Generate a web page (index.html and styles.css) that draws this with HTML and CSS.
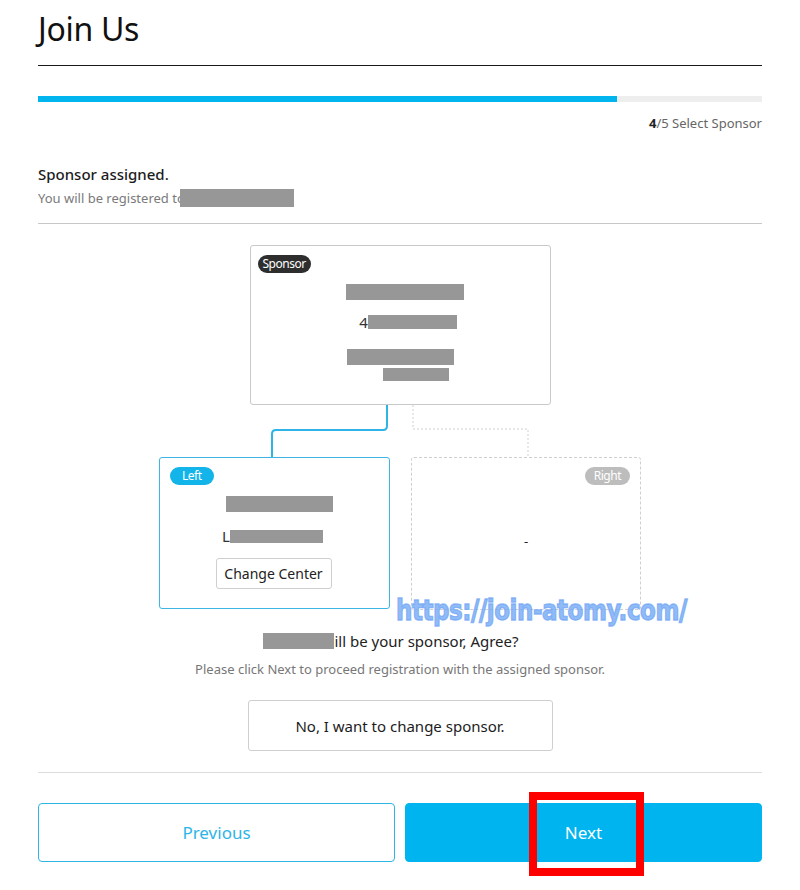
FILE: index.html
```html
<!DOCTYPE html>
<html lang="en">
<head>
<meta charset="utf-8">
<title>Join Us</title>
<link rel="stylesheet" href="styles.css">
</head>
<body>
<div class="page">
  <header class="header">
    <h1 class="title">Join Us</h1>
  </header>

  <div class="progress"><div class="progress-fill"></div></div>
  <div class="step"><b>4</b>/5 Select Sponsor</div>

  <section class="assigned">
    <div class="assigned-title">Sponsor assigned.</div>
    <div class="assigned-sub">You will be registered to<span class="redact r-sub"></span></div>
  </section>

  <section class="tree">
    <div class="card card-sponsor">
      <span class="badge badge-dark">Sponsor</span>
      <div class="line shift1"><span class="redact r-s1"></span></div>
      <div class="line line-2 shift"><span class="digit">4</span><span class="redact r-s2"></span></div>
      <div class="line line-3"><span class="redact r-s3"></span></div>
      <div class="line line-4 shift2"><span class="redact r-s4"></span></div>
    </div>

    <svg class="connector" width="482" height="52" viewBox="0 0 482 52">
      <path d="M228 0 V21 Q228 25 224 25 H117 Q113 25 113 29 V52" fill="none" stroke="#2eb4e6" stroke-width="2"/>
      <path d="M254 0 V24 H369 V52" fill="none" stroke="#cfcfcf" stroke-width="1" stroke-dasharray="2 2"/>
    </svg>

    <div class="legs">
      <div class="card card-left">
        <span class="badge badge-blue">Left</span>
        <div class="line shift-l1"><span class="redact r-l1"></span></div>
        <div class="line line-l2"><span class="digit">L</span><span class="redact r-l2"></span></div>
        <button class="btn-small">Change Center</button>
      </div>
      <div class="card card-right">
        <span class="badge badge-grey">Right</span>
        <div class="dash">-</div>
      </div>
    </div>
  </section>

  <p class="agree"><span class="redact r-agree"></span>ill be your sponsor, Agree?</p>
  <p class="hint">Please click Next to proceed registration with the assigned sponsor.</p>

  <div class="change-wrap">
    <button class="btn-change">No, I want to change sponsor.</button>
  </div>

  <footer class="actions">
    <button class="btn btn-prev">Previous</button>
    <button class="btn btn-next">Next</button>
  </footer>

  <div class="watermark">https://join-atomy.com/</div>
  <div class="highlight"></div>
</div>
</body>
</html>
```

FILE: styles.css
```css
* { box-sizing: border-box; }

html, body {
  margin: 0;
  padding: 0;
  background: #fff;
}

body {
  font-family: "Noto Sans", "Open Sans", "Liberation Sans", sans-serif;
  color: #222;
}

.page {
  position: relative;
  width: 800px;
  height: 890px;
  padding: 0 38px;
  overflow: hidden;
}

.header {
  padding-top: 7px;
  padding-bottom: 14px;
  border-bottom: 1px solid #1a1a1a;
}

.title {
  margin: 0;
  font-size: 32px;
  line-height: 44px;
  font-weight: 400;
  color: #111;
  letter-spacing: -0.3px;
}

.progress {
  margin-top: 30px;
  height: 6px;
  background: #eeeeee;
}

.progress-fill {
  width: 80%;
  height: 100%;
  background: #00b4ee;
}

.step {
  margin-top: 12px;
  text-align: right;
  font-size: 13px;
  line-height: 18px;
  color: #666;
}

.step b {
  color: #222;
  font-weight: 700;
}

.assigned {
  margin-top: 31px;
  padding-bottom: 16px;
  border-bottom: 1px solid #c8c8c8;
}

.assigned-title {
  font-size: 15px;
  line-height: 22px;
  font-weight: 500;
  color: #1c1c1c;
}

.assigned-sub {
  margin-top: 4px;
  font-size: 13px;
  line-height: 18px;
  color: #7a7a7a;
  display: flex;
  align-items: center;
}

.redact {
  display: inline-block;
  background: #979797;
}

.r-sub { width: 114px; height: 18px; margin-left: -5px; }

.tree {
  margin-top: 21px;
  display: flex;
  flex-direction: column;
  align-items: center;
}

.card {
  position: relative;
  background: #fff;
  border-radius: 3px;
}

.card-sponsor {
  width: 301px;
  height: 160px;
  border: 1px solid #c9c9c9;
  padding-top: 38px;
  display: flex;
  flex-direction: column;
  align-items: center;
}

.line {
  display: flex;
  align-items: center;
  justify-content: center;
  font-size: 15px;
  color: #222;
}

.line-2 { margin-top: 15px; }
.line-3 { margin-top: 20px; }
.line-4 { margin-top: 3px; }
.shift1 { margin-left: 10px; }
.shift { margin-left: 16px; }
.shift2 { margin-left: 32px; }

.digit {
  font-size: 15px;
  line-height: 14px;
  color: #333;
}

.r-s1 { width: 118px; height: 16px; }
.r-s2 { width: 89px; height: 14px; }
.r-s3 { width: 107px; height: 16px; }
.r-s4 { width: 66px; height: 13px; }

.badge {
  position: absolute;
  top: 9px;
  height: 18px;
  padding: 0 6px;
  border-radius: 9px;
  font-size: 12px;
  line-height: 18px;
  color: #fff;
  letter-spacing: -0.5px;
}

.badge-dark { left: 7px; background: #2e2e2e; padding: 0 5px; }
.badge-blue { left: 10px; background: #12b4ea; padding: 0 12px; }
.badge-grey { right: 10px; background: #bdbdbd; padding: 0 9px; }

.connector {
  display: block;
}

.legs {
  display: flex;
  gap: 21px;
  width: 482px;
}

.card-left {
  width: 231px;
  height: 152px;
  border: 1px solid #3db6e4;
  padding-top: 38px;
  display: flex;
  flex-direction: column;
  align-items: center;
}

.shift-l1 { margin-left: 10px; }

.r-l1 { width: 107px; height: 16px; }
.r-l2 { width: 93px; height: 13px; }

.line-l2 {
  margin-top: 17px;
  margin-left: -4px;
}

.btn-small {
  margin-top: 15px;
  margin-left: -2px;
  width: 116px;
  height: 31px;
  border: 1px solid #cfcfcf;
  border-radius: 3px;
  background: #fff;
  font-family: inherit;
  font-size: 14px;
  color: #222;
  padding: 0;
}

.card-right {
  width: 230px;
  height: 153px;
  border: 1px dashed #cfcfcf;
  display: flex;
  align-items: center;
  justify-content: center;
}

.dash {
  font-size: 13px;
  color: #222;
  margin-top: 14px;
}

.agree {
  margin: 20px 0 0;
  padding-right: 18px;
  display: flex;
  align-items: center;
  justify-content: center;
  font-size: 15px;
  line-height: 22px;
  color: #222;
}

.r-agree { width: 71px; height: 16px; }

.hint {
  margin: 8px 0 0;
  text-align: center;
  font-size: 13px;
  line-height: 18px;
  color: #777;
}

.change-wrap {
  margin-top: 22px;
  padding-bottom: 21px;
  border-bottom: 1px solid #dddddd;
  display: flex;
  justify-content: center;
}

.btn-change {
  width: 305px;
  height: 51px;
  border: 1px solid #cfcfcf;
  border-radius: 3px;
  background: #fff;
  font-family: inherit;
  font-size: 15px;
  color: #1c1c1c;
  padding: 0;
}

.actions {
  margin-top: 30px;
  display: flex;
  gap: 10px;
}

.btn {
  flex: 1;
  height: 59px;
  border-radius: 4px;
  font-family: inherit;
  font-size: 17px;
  padding: 0;
}

.btn-prev {
  background: #fff;
  border: 1px solid #2db5e6;
  color: #2db5e6;
}

.btn-next {
  background: #00b5ef;
  border: 1px solid #00b5ef;
  color: #fff;
}

.watermark {
  position: absolute;
  left: 396px;
  top: 592px;
  font-family: "DejaVu Sans", sans-serif;
  font-stretch: condensed;
  font-weight: 700;
  font-size: 29px;
  line-height: 36px;
  color: rgba(115, 168, 245, 0.8);
  -webkit-text-stroke: 1.3px rgba(115, 168, 245, 0.8);
  transform: scaleX(0.88);
  transform-origin: left center;
  white-space: nowrap;
  letter-spacing: -0.5px;
}

.highlight {
  position: absolute;
  left: 529px;
  top: 792px;
  width: 115px;
  height: 84px;
  border: 8px solid #f00;
}
```
